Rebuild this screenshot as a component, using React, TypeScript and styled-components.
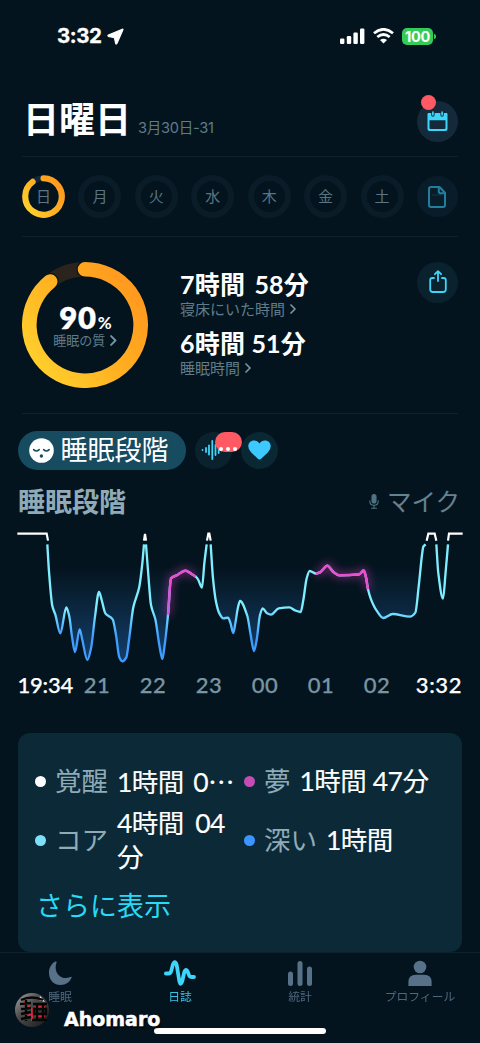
import React from "react";
import styled, { createGlobalStyle } from "styled-components";

const color = {
  bg: "#04141e",
  line: "#0d222d",
  muted: "#5f7c8b",
  soft: "#8fabb8",
  cyan: "#3dd5fa",
  red: "#ff5a63",
  tab: "#567188",
};

const Global = createGlobalStyle`
  * { box-sizing: border-box; }
  body {
    margin: 0;
    background: ${color.bg};
    font-family: Lato, "Noto Sans CJK JP", sans-serif;
    color: #fff;
  }
  svg { display: block; flex: none; }
`;

const Screen = styled.main`
  position: relative;
  width: 480px;
  height: 1043px;
  overflow: hidden;
  display: flex;
  flex-direction: column;
  background: ${color.bg};
`;

const StatusBar = styled.header`
  flex: none;
  height: 86px;
  padding: 25px 44px 0 57px;
  display: flex;
  align-items: flex-start;
  justify-content: space-between;
`;

const StatusGroup = styled.div<{ $gap: number }>`
  display: flex;
  align-items: center;
  gap: ${(p) => p.$gap}px;
  height: 22px;
`;

const Clock = styled.span`
  font: 700 20.5px/22px Inter, sans-serif;
  letter-spacing: -0.4px;
  -webkit-text-stroke: 0.3px #fff;
`;

const Battery = styled.div`
  display: flex;
  align-items: center;
  gap: 1px;
  &::after {
    content: "";
    width: 2px;
    height: 5px;
    border-radius: 0 2px 2px 0;
    background: #34c759;
  }
`;

const BatteryLevel = styled.span`
  width: 31px;
  height: 17px;
  border-radius: 5px;
  background: #32cd58;
  text-align: center;
  font: 700 14.5px/17px Inter, sans-serif;
  letter-spacing: -0.2px;
`;

const Section = styled.section<{ $height: number }>`
  flex: none;
  height: ${(p) => p.$height}px;
  margin: 0 22px;
  border-bottom: 1px solid ${color.line};
  display: flex;
  align-items: center;
`;

const TitleRow = styled.div`
  display: flex;
  align-items: baseline;
  gap: 7px;
  flex: 1;
  padding-bottom: 4px;
`;

const Title = styled.h1`
  margin: 0 0 0 1px;
  font-size: 36px;
  line-height: 44px;
  font-weight: 700;
`;

const DateRange = styled.span`
  font: 400 14.6px/20px Inter, "Noto Sans CJK JP", sans-serif;
  letter-spacing: -0.3px;
  color: ${color.muted};
`;

const RoundButton = styled.button<{ $size: number; $bg: string }>`
  position: relative;
  flex: none;
  width: ${(p) => p.$size}px;
  height: ${(p) => p.$size}px;
  padding: 0;
  border: 0;
  border-radius: 50%;
  background: ${(p) => p.$bg};
  display: flex;
  align-items: center;
  justify-content: center;
`;

const Dot = styled.span`
  position: absolute;
  left: 4px;
  top: -6px;
  width: 15px;
  height: 15px;
  border-radius: 50%;
  background: ${color.red};
`;

const Bubble = styled.span`
  position: absolute;
  left: 20px;
  top: 0;
  width: 27px;
  height: 20px;
  border-radius: 10px;
  background: ${color.red};
  display: flex;
  align-items: flex-end;
  justify-content: center;
  gap: 3px;
  padding-bottom: 1px;
  i {
    width: 4px;
    height: 4px;
    border-radius: 50%;
    background: #fff;
  }
`;

const Week = styled(Section)`
  justify-content: space-between;
`;

const Day = styled.div<{ $active?: boolean }>`
  width: 43px;
  height: 43px;
  border-radius: 50%;
  border: ${(p) => (p.$active ? "0" : "6px solid #091c28")};
  display: grid;
  place-items: center;
  font-size: 15px;
  line-height: 20px;
  color: ${(p) => (p.$active ? "#5b7685" : "#597483")};
  > * { grid-area: 1 / 1; }
  > span { padding-bottom: 2px; }
`;

const Summary = styled(Section)`
  align-items: flex-start;
  padding-top: 25px;
`;

const RingBox = styled.div`
  display: grid;
  place-items: center;
  width: 126px;
  height: 126px;
  > * { grid-area: 1 / 1; }
`;

const RingText = styled.div`
  display: flex;
  flex-direction: column;
  align-items: center;
  padding-top: 2px;
`;

const Score = styled.div`
  font: 800 31px/28px Lato, sans-serif;
  letter-spacing: 0.8px;
  padding-left: 1px;
  -webkit-text-stroke: 0.3px #fff;
  small {
    font-size: 17px;
    font-weight: 700;
    line-height: 1;
    margin-left: 1px;
    letter-spacing: 0;
    -webkit-text-stroke: 0;
  }
`;

const Caption = styled.div<{ $size: number }>`
  display: flex;
  align-items: center;
  gap: 5px;
  font-size: ${(p) => p.$size}px;
  line-height: 18px;
  color: ${color.muted};
`;

const Stats = styled.dl`
  flex: 1;
  margin: 6px 0 0 32px;
`;

const Stat = styled.div`
  height: 59px;
`;

const StatValue = styled.dt<{ $space: number }>`
  font-size: 25px;
  line-height: 32px;
  font-weight: 700;
  letter-spacing: 0.2px;
  word-spacing: ${(p) => p.$space}px;
`;

const Pills = styled.nav`
  flex: none;
  display: flex;
  align-items: center;
  gap: 9px;
  margin: 16px 17.5px 0;
  height: 40px;
`;

const ActivePill = styled.div`
  width: 168px;
  height: 39px;
  border-radius: 20px;
  background: #174c60;
  display: flex;
  align-items: center;
  gap: 7px;
  padding-left: 11px;
  font-size: 27px;
  line-height: 36px;
  white-space: nowrap;
`;

const ChartHead = styled.div`
  flex: none;
  height: 50px;
  padding: 13px 20px 0 18px;
  display: flex;
  justify-content: space-between;
  align-items: center;
`;

const ChartTitle = styled.h2`
  margin: 0;
  font-size: 27px;
  line-height: 36px;
  font-weight: 700;
  color: ${color.soft};
`;

const Mic = styled.div`
  display: flex;
  align-items: center;
  gap: 8px;
  font-size: 24.5px;
  line-height: 34px;
  color: #648291;
`;

const Axis = styled.div`
  flex: none;
  height: 32px;
  margin: 0 18px;
  padding-bottom: 3px;
  display: grid;
  grid-template-columns: 51px repeat(5, 56px) 56px 1fr;
  align-items: center;
  font: 500 22px/26px Lato, sans-serif;
  color: #7995a3;
`;

const Tick = styled.span<{ $edge?: "left" | "right" }>`
  color: ${(p) => (p.$edge ? "#fff" : "inherit")};
  text-align: ${(p) => p.$edge ?? "center"};
  letter-spacing: ${(p) => (p.$edge === "left" ? -0.2 : 0.6)}px;
  margin-left: ${(p) => (p.$edge === "left" ? -0.5 : 0)}px;
  white-space: nowrap;
  -webkit-text-stroke: 0.25px currentColor;
`;

const Card = styled.section`
  flex: none;
  height: 219px;
  margin: 31px 18px 0;
  border-radius: 12px;
  background: #0b2936;
  padding: 28px 16px 0 17px;
`;

const Legend = styled.div`
  display: grid;
  grid-template-columns: 209px 1fr;
  grid-template-rows: 40px 78px;
  align-items: center;
`;

const Entry = styled.div`
  display: flex;
  align-items: center;
  font-size: 26.5px;
  line-height: 34px;
`;

const Bullet = styled.span<{ $color: string }>`
  flex: none;
  width: 11px;
  height: 11px;
  margin-right: 9px;
  border-radius: 50%;
  background: ${(p) => p.$color};
`;

const Name = styled.span`
  flex: none;
  margin-right: 9px;
  color: ${color.soft};
`;

const Amount = styled.span<{ $wrap?: boolean; $space?: number }>`
  font-weight: 400;
  letter-spacing: -0.5px;
  word-spacing: ${(p) => p.$space ?? 3}px;
  -webkit-text-stroke: 0.15px #fff;
  white-space: ${(p) => (p.$wrap ? "pre-line" : "nowrap")};
`;

const Ellipsis = styled.span`
  font-family: "Noto Sans CJK JP", sans-serif;
`;

const More = styled.a`
  display: block;
  margin: 10px 0 0 1px;
  font-size: 27px;
  line-height: 34px;
  color: #29d9f5;
`;

const TabBar = styled.nav`
  flex: none;
  height: 92px;
  border-top: 1px solid ${color.line};
  display: grid;
  grid-template-columns: repeat(4, 120px);
`;

const Tab = styled.div<{ $active?: boolean }>`
  display: flex;
  flex-direction: column;
  align-items: center;
  padding-top: 7px;
  gap: 2px;
  font-size: 11.8px;
  line-height: 18px;
  color: ${(p) => (p.$active ? color.cyan : color.tab)};
  span { opacity: 0.9; }
`;

const HomeIndicator = styled.div`
  position: absolute;
  left: 154px;
  top: 1028px;
  width: 172px;
  height: 6px;
  border-radius: 3px;
  background: #fff;
`;

const Signature = styled.div`
  position: absolute;
  left: 14px;
  top: 992px;
  display: flex;
  align-items: flex-start;
  gap: 14px;
  font: 700 19px/22px "DejaVu Sans", sans-serif;
  text-shadow: 1px 2px 2px #000;
  -webkit-text-stroke: 0.5px #fff;
  span { padding-top: 16px; }
  svg { -webkit-text-stroke: 0; }
`;

type Point = [number, number];

/* Cubic segments that never overshoot the sampled values. */
function smooth(points: Point[], from = 0, to = points.length - 1) {
  const slope = (i: number) =>
    (points[i + 1][1] - points[i][1]) / (points[i + 1][0] - points[i][0]);
  const tangent = (i: number) => {
    if (i === 0) return slope(0);
    if (i === points.length - 1) return slope(i - 1);
    const a = slope(i - 1);
    const b = slope(i);
    return a * b <= 0 ? 0 : (2 * a * b) / (a + b);
  };
  let d = `M${points[from][0]} ${points[from][1]}`;
  for (let i = from; i < to; i++) {
    const [x0, y0] = points[i];
    const [x1, y1] = points[i + 1];
    const h = (x1 - x0) / 3;
    d += `C${x0 + h} ${y0 + h * tangent(i)} ${x1 - h} ${y1 - h * tangent(i + 1)} ${x1} ${y1}`;
  }
  return d;
}

/* Sleep depth samples, three units per pixel. */
const runs: Point[][] = [
  [[142, 73], [147, 155], [157, 258], [166, 284], [181, 340], [199, 262], [208, 290], [216, 350], [225, 396], [239, 328], [247, 360], [262, 420], [273, 385], [285, 290], [297, 216], [305, 240], [316, 280], [338, 298], [348, 345], [358, 412], [367, 424], [379, 412], [387, 360], [400, 262], [418, 200], [427, 130], [432, 73]],
  [[438, 73], [445, 165], [453, 255], [466, 298], [478, 375], [487, 417], [494, 375], [504, 285], [513, 175], [530, 166], [556, 152], [575, 162], [587, 170], [594, 178], [606, 203], [613, 130], [620, 73]],
  [[632, 73], [639, 175], [648, 245], [658, 280], [670, 295], [684, 293], [691, 308], [700, 339], [706, 310], [714, 262], [720, 243], [742, 288], [752, 345], [762, 393], [770, 360], [780, 285], [788, 265], [800, 279], [813, 284], [836, 265], [868, 262], [885, 271], [902, 276], [910, 240], [920, 175], [929, 153], [948, 161], [960, 157], [982, 137], [1000, 156], [1018, 166], [1078, 163], [1091, 151], [1098, 172], [1104, 208], [1113, 238], [1130, 272], [1150, 294], [1178, 282], [1230, 290], [1246, 278], [1256, 200], [1266, 105], [1270, 80], [1277, 73]],
  [[1309, 73], [1315, 160], [1329, 236], [1337, 155], [1344, 73]],
];

const dreams = [smooth(runs[1], 7, 12), smooth(runs[2], 26, 34)];

function SleepChart() {
  return (
    <svg width="480" height="150" viewBox="0 0 1440 450" fill="none">
      <defs>
        <linearGradient id="depth" gradientUnits="userSpaceOnUse" x1="0" y1="265" x2="0" y2="350">
          <stop offset="0" stopColor="#7eeeff" />
          <stop offset="1" stopColor="#3f9dff" />
        </linearGradient>
        <linearGradient id="fill" gradientUnits="userSpaceOnUse" x1="0" y1="140" x2="0" y2="425">
          <stop offset="0" stopColor="#1f5b9c" stopOpacity="0" />
          <stop offset="1" stopColor="#1f5b9c" stopOpacity="0.6" />
        </linearGradient>
        <linearGradient id="dreamFade" gradientUnits="userSpaceOnUse" x1="0" y1="195" x2="0" y2="300">
          <stop offset="0" stopColor="#e84fcf" />
          <stop offset="1" stopColor="#ad6be8" />
        </linearGradient>
        <filter id="glow" x="-30%" y="-60%" width="160%" height="220%">
          <feGaussianBlur stdDeviation="13" />
        </filter>
      </defs>
      {runs.map((r, i) => (
        <path key={i} d={smooth(r) + "Z"} fill="url(#fill)" />
      ))}
      {dreams.map((d, i) => (
        <path key={i} d={d} stroke="#e63fc8" strokeWidth="17" opacity="0.45" filter="url(#glow)" />
      ))}
      {runs.map((r, i) => (
        <path key={i} d={smooth(r)} stroke="url(#depth)" strokeWidth="7" strokeLinejoin="round" />
      ))}
      {dreams.map((d, i) => (
        <path key={i} d={d} stroke="url(#dreamFade)" strokeWidth="7.5" />
      ))}
      <path
        d="M52 41H140L144 62M432 62L435 42L438 62M621 62L625 41H628L632 62M1280 62L1285 41H1304L1309 62M1344 62L1347 41H1388"
        stroke="#fff"
        strokeWidth="6.5"
      />
    </svg>
  );
}

function Chevron({ size = 10 }: { size?: number }) {
  return (
    <svg width={size * 0.6} height={size} viewBox="0 0 6 10" fill="none" stroke="#7896a5" strokeWidth="1.7" strokeLinecap="round" strokeLinejoin="round">
      <path d="M1 1L5 5L1 9" />
    </svg>
  );
}

function SmallRing() {
  return (
    <svg width="43" height="43" viewBox="0 0 126 126" fill="none" strokeLinecap="round">
      <circle cx="63" cy="63" r="53.5" stroke="#112638" strokeWidth="18" />
      <path d="M63 9.5A53.5 53.5 0 1 1 31 20.1" stroke="url(#gold)" strokeWidth="18" />
    </svg>
  );
}

function BigRing() {
  return (
    <svg width="126" height="126" viewBox="0 0 126 126" fill="none" strokeLinecap="round">
      <defs>
        <linearGradient id="gold" gradientUnits="userSpaceOnUse" x1="110" y1="15" x2="0" y2="95">
          <stop offset="0" stopColor="#ff981f" />
          <stop offset="0.45" stopColor="#ffae20" />
          <stop offset="1" stopColor="#ffd22e" />
        </linearGradient>
      </defs>
      <circle cx="63" cy="63" r="55.7" stroke="#2b241d" strokeWidth="14.6" />
      <path d="M63 7.3A55.7 55.7 0 1 1 28.2 19.5" stroke={color.bg} strokeWidth="17" />
      <path d="M63 7.3A55.7 55.7 0 1 1 28.2 19.5" stroke="url(#gold)" strokeWidth="14.6" />
    </svg>
  );
}

function CalendarIcon() {
  return (
    <svg width="21" height="21" viewBox="0 0 21 21">
      <path fillRule="evenodd" fill={color.cyan} d="M1 2H4.2V4A1.7 1.7 0 0 0 7.6 4V2H13.4V4A1.7 1.7 0 0 0 16.8 4V2H20L20.5 3V18A2 2 0 0 1 18.5 20H2.5A2 2 0 0 1 .5 18V3ZM2.5 9.2V17Q2.5 18 3.5 18H17.5Q18.5 18 18.5 17V9.2Z" />
      <path stroke={color.cyan} strokeWidth="1.7" strokeLinecap="round" d="M5.9 1.2V3.8M15.1 1.2V3.8" />
    </svg>
  );
}

function NoteIcon() {
  return (
    <svg width="18" height="22" viewBox="0 0 18 22" fill="none" stroke="#217f9c" strokeWidth="2" strokeLinejoin="round">
      <path d="M3 1H11.5L17 6.7V19A2 2 0 0 1 15 21H3A2 2 0 0 1 1 19V3A2 2 0 0 1 3 1Z" />
      <path d="M10.8 1.5V5.5Q10.8 7.2 12.5 7.2H16.5" />
      <path d="M4 9H14" strokeWidth="0.6" opacity="0.5" />
    </svg>
  );
}

function ShareIcon() {
  return (
    <svg width="18" height="26" viewBox="0 0 18 26" fill="none" stroke={color.cyan} strokeWidth="1.8" strokeLinecap="round" strokeLinejoin="round">
      <path d="M5 8H3.5Q1.2 8 1.2 10.3V19.2Q1.2 22 4 22H14Q16.8 22 16.8 19.2V10.3Q16.8 8 14.5 8H13" />
      <path d="M9 11V1.5M5.9 4.2L9 1.2L12.1 4.2" />
    </svg>
  );
}

function SleepingFace() {
  return (
    <svg width="25" height="25" viewBox="0 0 25 25" fill="none">
      <circle cx="12.5" cy="12.5" r="12.3" fill="#fff" />
      <path d="M4.6 11.6Q7.4 14.3 10.2 11.6M14.6 11.6Q17.4 14.3 20.2 11.6" stroke="#174c60" strokeWidth="1.5" strokeLinecap="round" />
      <circle cx="12.4" cy="18" r="1.7" fill="#174c60" />
    </svg>
  );
}

const days = ["月", "火", "水", "木", "金", "土"];

export default function App() {
  return (
    <Screen lang="ja">
      <Global />
      <StatusBar>
        <StatusGroup $gap={5}>
          <Clock>3:32</Clock>
          <svg width="17" height="17" viewBox="0 0 17 17">
            <path d="M15.3 1.2L1.4 7Q.4 7.7 1.4 8.3L7.4 9.6L8.7 15.5Q9.2 16.6 9.9 15.5L15.9 1.8Q16.1 .9 15.3 1.2Z" fill="#fff" stroke="#fff" strokeWidth="1.2" strokeLinejoin="round" />
          </svg>
        </StatusGroup>
        <StatusGroup $gap={8}>
          <svg width="25" height="16" viewBox="0 0 25 16" fill="#fff">
            <rect x="0" y="10.5" width="4.4" height="5.5" rx="1.2" />
            <rect x="6.8" y="8" width="4.4" height="8" rx="1.2" />
            <rect x="13.4" y="4.5" width="4.4" height="11.5" rx="1.2" />
            <rect x="20" y="0.5" width="4.4" height="15.5" rx="1.2" />
          </svg>
          <svg width="21" height="16" viewBox="0 0 21 16" fill="none" stroke="#fff" strokeWidth="2.7">
            <path d="M1 5.2Q10.5 -2.6 20 5.2M4.3 9Q10.5 4 16.7 9" />
            <path d="M7 12Q10.5 9.3 14 12L10.5 15.6Z" fill="#fff" stroke="none" />
          </svg>
          <Battery>
            <BatteryLevel>100</BatteryLevel>
          </Battery>
        </StatusGroup>
      </StatusBar>

      <Section $height={71}>
        <TitleRow>
          <Title>日曜日</Title>
          <DateRange>3月30日-31</DateRange>
        </TitleRow>
        <RoundButton $size={41} $bg="#142a3a">
          <CalendarIcon />
          <Dot />
        </RoundButton>
      </Section>

      <Week $height={80}>
        <Day $active>
          <SmallRing />
          <span>日</span>
        </Day>
        {days.map((d) => (
          <Day key={d}>
            <span>{d}</span>
          </Day>
        ))}
        <RoundButton $size={41} $bg="#081d29">
          <NoteIcon />
        </RoundButton>
      </Week>

      <Summary $height={177}>
        <RingBox>
          <BigRing />
          <RingText>
            <Score>
              90<small>%</small>
            </Score>
            <Caption $size={13}>
              睡眠の質 <Chevron size={11} />
            </Caption>
          </RingText>
        </RingBox>
        <Stats>
          <Stat>
            <StatValue $space={3}>7時間 58分</StatValue>
            <Caption $size={15}>
              寝床にいた時間 <Chevron />
            </Caption>
          </Stat>
          <Stat>
            <StatValue $space={0}>6時間 51分</StatValue>
            <Caption $size={15}>
              睡眠時間 <Chevron />
            </Caption>
          </Stat>
        </Stats>
        <RoundButton $size={41} $bg="#0a222e">
          <ShareIcon />
        </RoundButton>
      </Summary>

      <Pills>
        <ActivePill>
          <SleepingFace />
          睡眠段階
        </ActivePill>
        <RoundButton $size={37} $bg="#0a222e">
          <svg width="25" height="20" viewBox="0 0 25 20" stroke={color.cyan} strokeWidth="1.8" strokeLinecap="round">
            <path d="M1.5 10V10.1M5 8V12M8 5.5V14.5M11.3 1V19M14.5 5V15M17.7 7V13M20.7 9.5V10.5" />
          </svg>
          <Bubble>
            <i />
            <i />
            <i />
          </Bubble>
        </RoundButton>
        <RoundButton $size={37} $bg="#0a2834">
          <svg width="23" height="20" viewBox="0 0 23 20">
            <path d="M11.5 19.5Q10.6 19.5 9.3 18.2L3 12.3Q.3 9.6 .3 6.2C.3 2.8 2.8 .4 6 .4Q9.5 .4 11.5 3.6Q13.5 .4 17 .4C20.2 .4 22.7 2.8 22.7 6.2Q22.7 9.6 20 12.3L13.7 18.2Q12.4 19.5 11.5 19.5Z" fill="#3dc9ff" />
          </svg>
        </RoundButton>
      </Pills>

      <ChartHead>
        <ChartTitle>睡眠段階</ChartTitle>
        <Mic>
          <svg width="10" height="15" viewBox="0 0 10 15" fill="none" stroke="#4f7383" strokeWidth="1.1" strokeLinecap="round">
            <rect x="3" y="0.6" width="4" height="8.4" rx="2" fill="#4f7383" />
            <path d="M.8 6.8V7.5Q.8 11.2 5 11.2Q9.2 11.2 9.2 7.5V6.8M5 11.2V14M2.5 14.2H7.5" />
          </svg>
          マイク
        </Mic>
      </ChartHead>
      <SleepChart />
      <Axis>
        <Tick $edge="left">19:34</Tick>
        {["21", "22", "23", "00", "01", "02"].map((h) => (
          <Tick key={h}>{h}</Tick>
        ))}
        <Tick $edge="right">3:32</Tick>
      </Axis>

      <Card>
        <Legend>
          <Entry>
            <Bullet $color="#fff" />
            <Name>覚醒</Name>
            <Amount>
              1時間 0<Ellipsis>…</Ellipsis>
            </Amount>
          </Entry>
          <Entry>
            <Bullet $color="#c74bb5" />
            <Name>夢</Name>
            <Amount $space={0}>1時間 47分</Amount>
          </Entry>
          <Entry>
            <Bullet $color="#7de0fb" />
            <Name>コア</Name>
            <Amount $wrap $space={5}>{"4時間 04\n分"}</Amount>
          </Entry>
          <Entry>
            <Bullet $color="#3d94ff" />
            <Name>深い</Name>
            <Amount>1時間</Amount>
          </Entry>
        </Legend>
        <More>さらに表示</More>
      </Card>

      <TabBar>
        <Tab>
          <svg width="26" height="26" viewBox="0 0 26 26">
            <path d="M8.5 1.5C-1.5 6 -.2 25 13.5 25Q21.5 25 24.7 17.5Q25 16.3 23.5 17C14 21 6 12.5 9.5 2.8Q10 1 8.5 1.5Z" fill={color.tab} />
          </svg>
          <span>睡眠</span>
        </Tab>
        <Tab $active>
          <svg width="32" height="26" viewBox="0 0 32 26" fill="none" stroke={color.cyan} strokeWidth="3.8" strokeLinecap="round" strokeLinejoin="round">
            <path d="M1.9 13.5H4.5Q6.5 13.5 7.2 11L8.8 5Q11 -1 12.8 5.5L15.3 21Q16.6 26.5 18.3 21L20.2 12.5Q22 7.5 24 12.5L25 15.2Q25.8 17 28 17H30" />
          </svg>
          <span>日誌</span>
        </Tab>
        <Tab>
          <svg width="24" height="26" viewBox="0 0 24 26" fill={color.tab}>
            <rect x="0" y="11.5" width="5" height="14.5" rx="2.5" />
            <rect x="9.5" y="1" width="5" height="25" rx="2.5" />
            <rect x="19" y="6.5" width="5" height="19.5" rx="2.5" />
          </svg>
          <span>統計</span>
        </Tab>
        <Tab>
          <svg width="24" height="26" viewBox="0 0 24 26" fill={color.tab}>
            <circle cx="12" cy="7" r="6.3" />
            <path d="M.4 26V22Q.4 14.8 8 14.8H16Q23.6 14.8 23.6 22V26Z" />
          </svg>
          <span>プロフィール</span>
        </Tab>
      </TabBar>

      <HomeIndicator />
      <Signature>
        <svg width="36" height="36" viewBox="0 0 36 36">
          <defs>
            <linearGradient id="badge" x1="0" y1="0" x2="1" y2="1">
              <stop offset="0" stopColor="#a9a9a9" />
              <stop offset="0.4" stopColor="#4d4d4d" />
              <stop offset="1" stopColor="#171717" />
            </linearGradient>
          </defs>
          <circle cx="18" cy="18" r="17" fill="url(#badge)" />
          <path d="M26 4L31 10L25 8Z" fill="#fff" />
          <path d="M9 10H17M8 17L16 14M9 27L17 22M18 16V29M21 15H31M21 24H31" stroke="#e02a3c" strokeWidth="2" />
          <path d="M7 8Q18 3 29 8M6 12L17 11M12 8V29M7 17L17 16M7 22L17 20M7 27L17 25M19 12H33M23 12V28M29 12V28M20 17H32V22H20ZM18 28H33" fill="none" stroke="#060606" strokeWidth="2.4" />
        </svg>
        <span>Ahomaro</span>
      </Signature>
    </Screen>
  );
}
